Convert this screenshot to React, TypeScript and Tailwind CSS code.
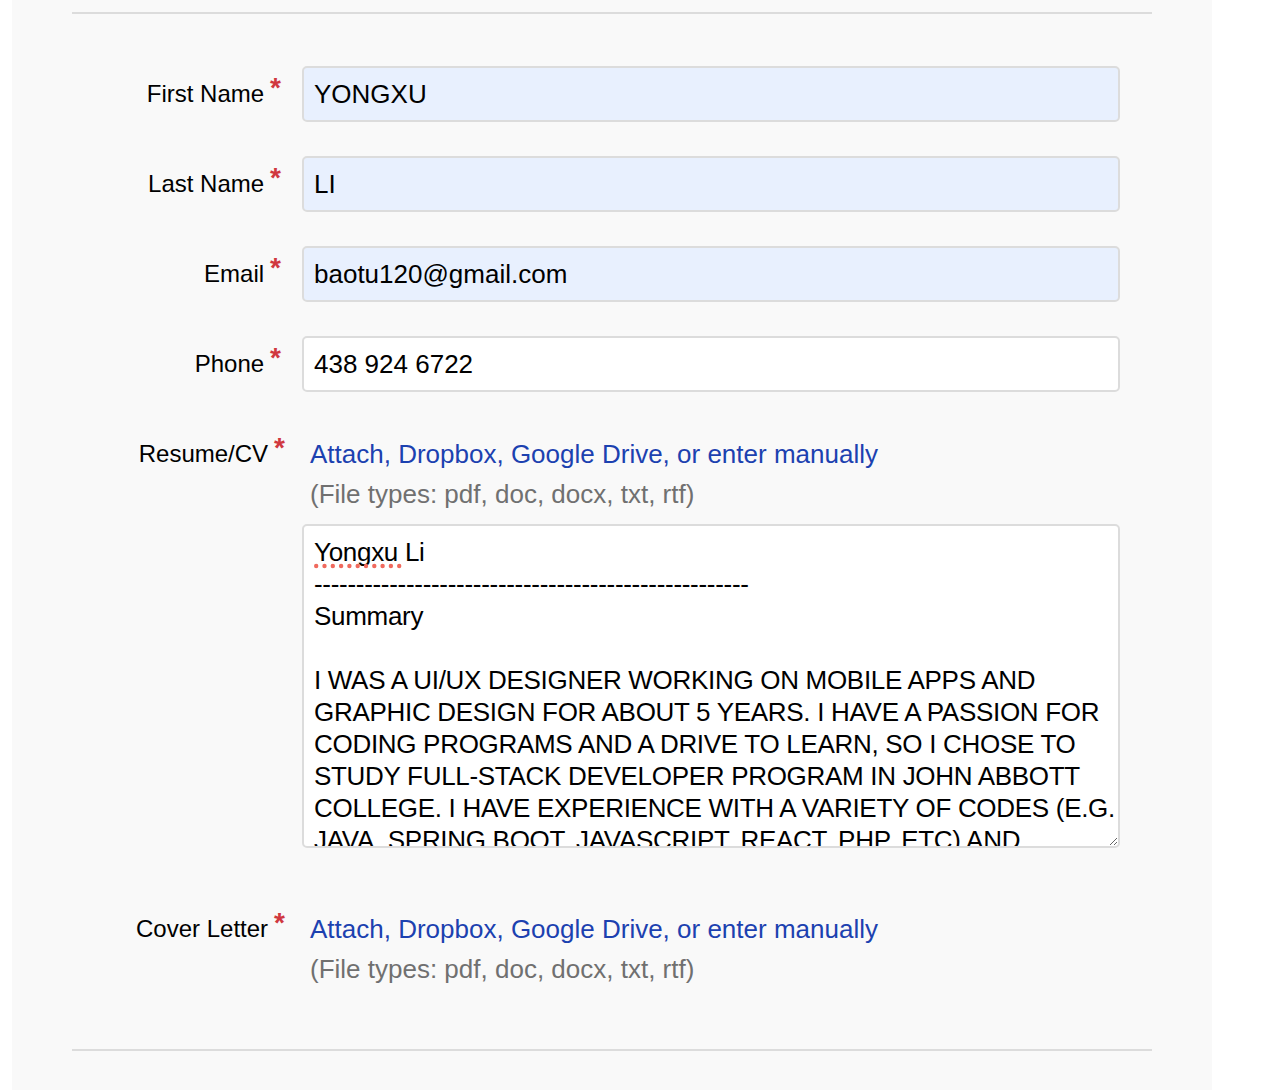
import React from 'react';

const fields = [
  { label: 'First Name', value: 'YONGXU', autofill: true },
  { label: 'Last Name', value: 'LI', autofill: true },
  { label: 'Email', value: 'baotu120@gmail.com', autofill: true },
  { label: 'Phone', value: '438 924 6722', autofill: false },
];

const resumeLines = [
  '-'.repeat(52),
  'Summary',
  '',
  'I WAS A UI/UX DESIGNER WORKING ON MOBILE APPS AND',
  'GRAPHIC DESIGN FOR ABOUT 5 YEARS. I HAVE A PASSION FOR',
  'CODING PROGRAMS AND A DRIVE TO LEARN, SO I CHOSE TO',
  'STUDY FULL-STACK DEVELOPER PROGRAM IN JOHN ABBOTT',
  'COLLEGE. I HAVE EXPERIENCE WITH A VARIETY OF CODES (E.G.',
  'JAVA, SPRING BOOT, JAVASCRIPT, REACT, PHP, ETC) AND',
];

const Label: React.FC<{ text: string; upload?: boolean }> = ({ text, upload }) => (
  <div className={`w-[230px] shrink-0 h-[56px] flex items-center justify-end ${upload ? 'pr-[17px]' : 'pr-[21px]'}`}>
    <span className="text-[24px] text-black">{text}</span>
    <span className="ml-[6px] relative -top-[6px] text-[28px] font-bold leading-none text-[#d0383f]">*</span>
  </div>
);

const UploadLinks: React.FC = () => (
  <>
    <div className="h-[56px] flex items-center pl-[8px]">
      <a href="#" className="text-[26px] text-[#1c41b0]">
        Attach, Dropbox, Google Drive, or enter manually
      </a>
    </div>
    <div className="pl-[8px] text-[26px] leading-[24px] text-[#707070]">
      (File types: pdf, doc, docx, txt, rtf)
    </div>
  </>
);

export default function App() {
  return (
    <div className="min-h-[1090px] bg-white font-['Liberation_Sans',Arial,sans-serif]">
      <div className="ml-[12px] w-[1200px] min-h-[1090px] bg-[#f9f9f9] px-[60px] pt-[12px]">
        <div className="h-[2px] bg-[#dcdcdc]" />

        <div className="pt-[52px] flex flex-col gap-[34px]">
          {fields.map(f => (
            <div key={f.label} className="flex">
              <Label text={f.label} />
              <div
                className={`w-[818px] h-[56px] rounded-[5px] border-2 border-[#dcdcdc] px-[10px] flex items-center text-[26px] text-black ${
                  f.autofill ? 'bg-[#e8f0fe]' : 'bg-white'
                }`}
              >
                {f.value}
              </div>
            </div>
          ))}

          {/* Resume row */}
          <div className="flex">
            <Label text="Resume/CV" upload />
            <div className="w-[818px]">
              <UploadLinks />
              <div className="mt-[18px] h-[324px] resize overflow-hidden rounded-[5px] border-2 border-[#dcdcdc] bg-white pt-[10px] px-[10px] text-[26px] leading-[32px] tracking-[-0.3px] text-black">
                <div className="whitespace-nowrap">
                  <span className="relative">
                    Yongxu
                    <svg className="absolute left-0 top-[26px]" width="90" height="6" viewBox="0 0 90 6">
                      {Array.from({ length: 11 }).map((_, i) => (
                        <circle key={i} cx={2.2 + i * 8.3} cy={3} r={2.2} fill="#f06a5e" />
                      ))}
                    </svg>
                  </span>{' '}
                  Li
                </div>
                {resumeLines.map((line, i) => (
                  <div key={i} className="whitespace-nowrap h-[32px]">
                    {line}
                  </div>
                ))}
              </div>
            </div>
          </div>
        </div>

        {/* Cover letter row */}
        <div className="flex mt-[53px]">
          <Label text="Cover Letter" upload />
          <div className="w-[818px]">
            <UploadLinks />
          </div>
        </div>

        <div className="mt-[68px] h-[2px] bg-[#dcdcdc]" />
      </div>
    </div>
  );
}
